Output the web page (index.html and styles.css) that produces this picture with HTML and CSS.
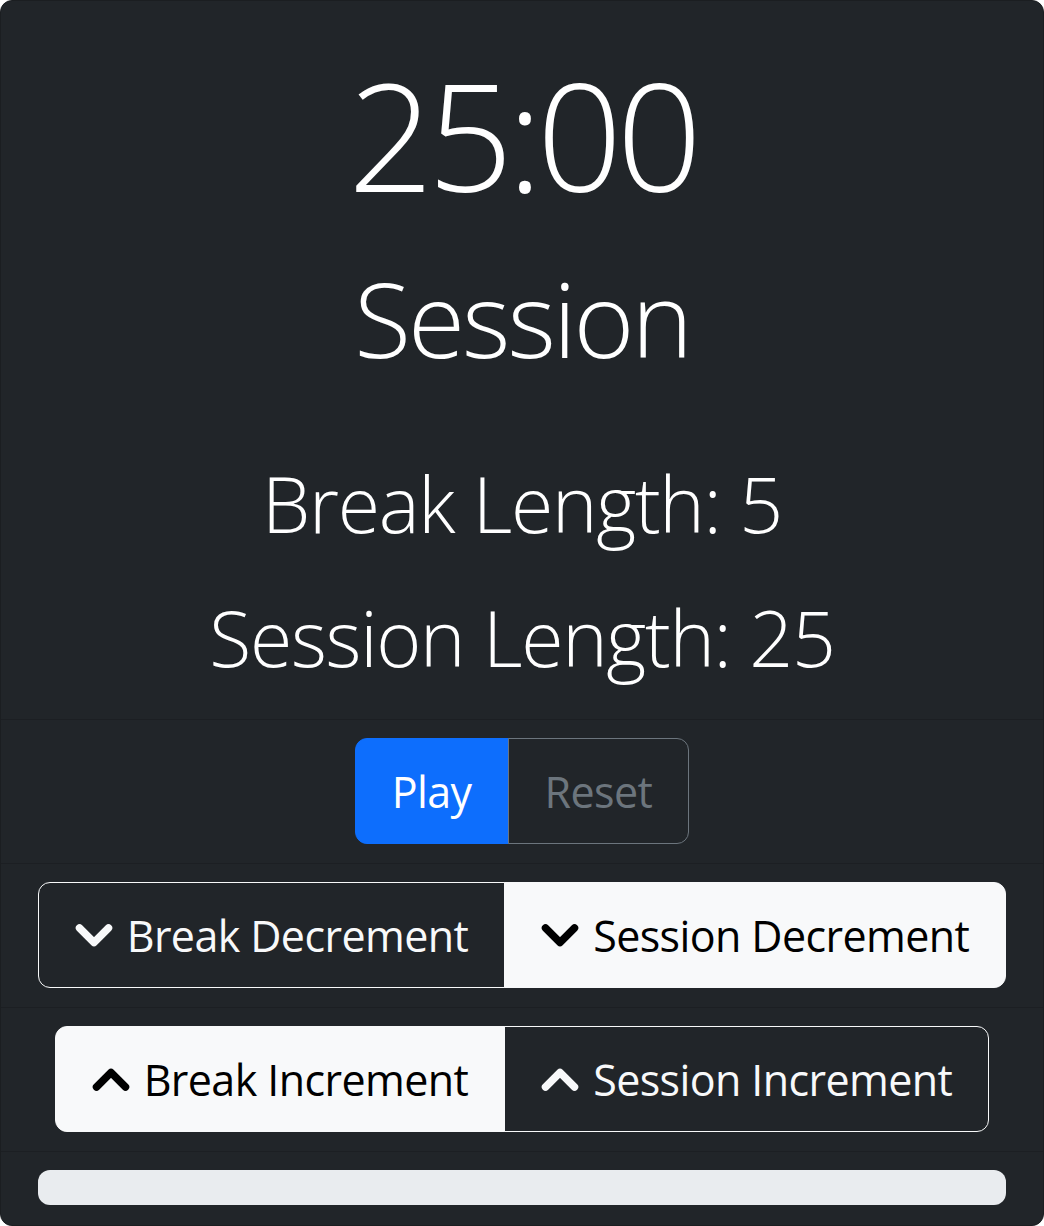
FILE: index.html
```html
<!DOCTYPE html>
<html lang="en">
<head>
<meta charset="utf-8">
<title>25 + 5 Clock</title>
<link rel="stylesheet" href="styles.css">
</head>
<body>
<div class="card">
  <div class="card-body">
    <div class="timer">25:00</div>
    <div class="mode">Session</div>
    <div class="length">Break Length: 5</div>
    <div class="length">Session Length: 25</div>
  </div>
  <ul class="list">
    <li class="item">
      <div class="group">
        <button class="btn btn-primary">Play</button>
        <button class="btn btn-outline-secondary">Reset</button>
      </div>
    </li>
    <li class="item">
      <div class="group">
        <button class="btn btn-outline-light"><svg class="chev" viewBox="0 0 38 25"><path d="M4.5 5 L19 19.5 L33.5 5"/></svg>Break Decrement</button>
        <button class="btn btn-light"><svg class="chev" viewBox="0 0 38 25"><path d="M4.5 5 L19 19.5 L33.5 5"/></svg>Session Decrement</button>
      </div>
    </li>
    <li class="item">
      <div class="group">
        <button class="btn btn-light"><svg class="chev" viewBox="0 0 38 25"><path d="M4.5 20 L19 5.5 L33.5 20"/></svg>Break Increment</button>
        <button class="btn btn-outline-light"><svg class="chev" viewBox="0 0 38 25"><path d="M4.5 20 L19 5.5 L33.5 20"/></svg>Session Increment</button>
      </div>
    </li>
    <li class="item item-last">
      <div class="progress"></div>
    </li>
  </ul>
</div>
</body>
</html>
```

FILE: styles.css
```css
html, body {
  margin: 0;
  padding: 0;
  background: #ffffff;
}

body {
  font-family: "Open Sans", "Noto Sans", sans-serif;
}

.card {
  box-sizing: border-box;
  width: 1044px;
  height: 1226px;
  background: #212529;
  border: 1px solid #1b1e21;
  border-radius: 12px;
  overflow: hidden;
  display: flex;
  flex-direction: column;
}

.card-body {
  padding: 53px 32px 31px;
  text-align: center;
  color: #ffffff;
  font-weight: 300;
}

.timer {
  font-size: 150px;
  line-height: 160px;
  letter-spacing: -6px;
}

.mode {
  font-size: 104px;
  line-height: 120px;
  letter-spacing: -3px;
  margin-top: 44px;
}

.length {
  font-size: 77px;
  line-height: 100px;
  letter-spacing: -1.3px;
  margin-top: 34px;
}

.mode + .length {
  margin-top: 76px;
}

.list {
  list-style: none;
  margin: 0;
  padding: 0;
}

.item {
  border-top: 1px solid #1c1f23;
  padding: 18px 32px 19px;
  display: flex;
  justify-content: center;
}

.group {
  display: flex;
}

.btn {
  box-sizing: border-box;
  height: 106px;
  padding: 0 36px;
  font-family: inherit;
  font-size: 43px;
  letter-spacing: -0.6px;
  font-weight: 400;
  white-space: nowrap;
  border: 1px solid transparent;
  background: transparent;
  display: flex;
  align-items: center;
  gap: 14px;
  cursor: pointer;
}

.btn:first-child {
  border-radius: 12px 0 0 12px;
}

.btn:last-child {
  border-radius: 0 12px 12px 0;
  margin-left: -1px;
}

.btn-primary {
  background: #0d6efd;
  border-color: #0d6efd;
  color: #ffffff;
}

.btn-outline-secondary {
  border-color: #6c757d;
  color: #6c757d;
}

.btn-outline-light {
  border-color: #f8f9fa;
  color: #f8f9fa;
}

.btn-light {
  background: #f8f9fa;
  border-color: #f8f9fa;
  color: #000000;
}

.chev {
  width: 38px;
  height: 25px;
  flex: none;
}

.chev path {
  fill: none;
  stroke: currentColor;
  stroke-width: 7.5;
  stroke-linecap: round;
  stroke-linejoin: round;
}

.item-last {
  padding: 18px 37px 19px;
  display: block;
}

.progress {
  height: 35px;
  border-radius: 12px;
  background: #e9ecef;
}
```
